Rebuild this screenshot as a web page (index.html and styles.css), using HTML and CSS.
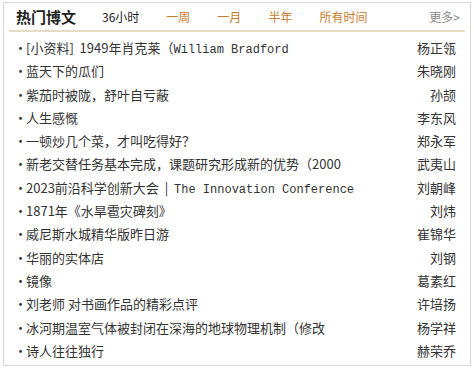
FILE: index.html
```html
<!DOCTYPE html>
<html lang="zh-CN">
<head>
  <meta charset="UTF-8">
  <title>热门博文</title>
  <link rel="stylesheet" href="styles.css">
</head>
<body>
  <div class="box">
    <div class="head">
      <h2>热门博文</h2>
      <span class="tab current">36小时</span>
      <a class="tab" href="#">一周</a>
      <a class="tab" href="#">一月</a>
      <a class="tab" href="#">半年</a>
      <a class="tab" href="#">所有时间</a>
      <a class="more" href="#">更多&gt;</a>
    </div>

    <ul class="list">
      <li><span class="title">[小资料]&nbsp; 1949年肖克莱（<span class="en">William Bradford</span></span><span class="author">杨正瓴</span></li>
      <li><span class="title">蓝天下的瓜们</span><span class="author">朱晓刚</span></li>
      <li><span class="title">紫茄时被陇，舒叶自亏蔽</span><span class="author">孙颉</span></li>
      <li><span class="title">人生感慨</span><span class="author">李东风</span></li>
      <li><span class="title">一顿炒几个菜，才叫吃得好？</span><span class="author">郑永军</span></li>
      <li><span class="title">新老交替任务基本完成，课题研究形成新的优势（2000</span><span class="author">武夷山</span></li>
      <li><span class="title">2023前沿科学创新大会 &nbsp;|&nbsp; <span class="en">The Innovation Conference</span></span><span class="author">刘朝峰</span></li>
      <li><span class="title">1871年《水旱雹灾碑刻》</span><span class="author">刘炜</span></li>
      <li><span class="title">威尼斯水城精华版昨日游</span><span class="author">崔锦华</span></li>
      <li><span class="title">华丽的实体店</span><span class="author">刘钢</span></li>
      <li><span class="title">镜像</span><span class="author">葛素红</span></li>
      <li><span class="title">刘老师 对书画作品的精彩点评</span><span class="author">许培扬</span></li>
      <li><span class="title">冰河期温室气体被封闭在深海的地球物理机制（修改</span><span class="author">杨学祥</span></li>
      <li><span class="title">诗人往往独行</span><span class="author">赫荣乔</span></li>
    </ul>
  </div>
</body>
</html>
```

FILE: styles.css
```css
body {
  margin: 0;
  background: #fff;
  font-family: "Noto Sans CJK SC", "Liberation Sans", sans-serif;
  color: #333;
}

.box {
  margin: 2px 3px 0;
  width: 466px;
  height: 362px;
  border: 1px solid #d9d9d9;
  overflow: hidden;
}

.head {
  display: flex;
  align-items: center;
  height: 27px;
  margin: 0 5px;
  padding-left: 7px;
  border-bottom: 2px solid #e6dcc3;
  font-size: 12px;
}

.head h2 {
  margin: 0 26px 0 0;
  font-size: 15px;
  font-weight: bold;
  color: #222;
}

.tab {
  margin-right: 27px;
  color: #c87a2b;
  text-decoration: none;
}

.tab.current {
  color: #222;
}

.more {
  margin-left: auto;
  margin-right: 5px;
  color: #888;
  text-decoration: none;
}

.list {
  list-style: none;
  margin: 0;
  padding: 4px 0 0;
}

.list li {
  display: flex;
  justify-content: space-between;
  height: 23.3px;
  line-height: 23.3px;
  margin: 0 14px 0 10px;
  font-size: 13px;
  white-space: nowrap;
}

.title {
  overflow: hidden;
  max-width: 340px;
}

.title::before {
  content: "·";
  display: inline-block;
  width: 12px;
  text-align: center;
}

.en {
  font-family: "Liberation Mono", monospace;
  font-size: 12px;
}

.author {
  color: #333;
}
```
